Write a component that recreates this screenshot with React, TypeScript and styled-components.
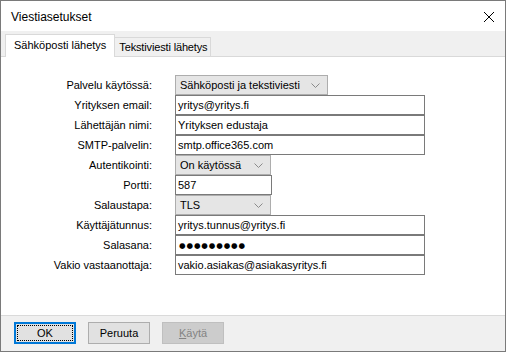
import React from 'react'
import styled, { createGlobalStyle } from 'styled-components'

const GlobalStyle = createGlobalStyle`
  html, body {
    margin: 0;
    padding: 0;
    background: #ffffff;
  }
  body {
    font-family: 'Liberation Sans', Arial, sans-serif;
    font-size: 11px;
    color: #000;
  }
`

const Window = styled.div`
  width: 506px;
  height: 352px;
  box-sizing: border-box;
  border: 1px solid #7a7a7a;
  display: flex;
  flex-direction: column;
  background: #f0f0f0;
`

const TitleBar = styled.div`
  height: 30px;
  background: #ffffff;
  display: flex;
  align-items: center;
  justify-content: space-between;
  padding: 0 11px 0 10px;
`

const Title = styled.div`
  font-size: 12px;
  color: #000;
  padding-top: 1px;
`

const CloseIcon = styled.svg`
  width: 10px;
  height: 10px;
  margin-top: 1px;
`

const TabStrip = styled.div`
  height: 25px;
  display: flex;
  align-items: flex-end;
  padding-left: 4px;
`

const Tab = styled.div<{ $active?: boolean }>`
  box-sizing: border-box;
  height: ${(p) => (p.$active ? '23px' : '19px')};
  padding: ${(p) => (p.$active ? '0 8px 2px 8px' : '0 3px 0 4px')};
  letter-spacing: ${(p) => (p.$active ? '0' : '-0.15px')};
  display: flex;
  align-items: center;
  background: ${(p) => (p.$active ? '#ffffff' : '#f0f0f0')};
  border: 1px solid #d9d9d9;
  border-bottom: none;
  margin-bottom: ${(p) => (p.$active ? '-1px' : '0')};
  position: relative;
  z-index: ${(p) => (p.$active ? 1 : 0)};
  margin-left: ${(p) => (p.$active ? '0' : '-1px')};
`

const Panel = styled.div`
  flex: 1;
  background: #ffffff;
  border-top: 1px solid #d9d9d9;
  border-bottom: 1px solid #dadada;
  padding-top: 18px;
`

const Form = styled.div`
  display: grid;
  grid-template-columns: 151px 1fr;
  grid-auto-rows: 20px;
  column-gap: 23px;
`

const Label = styled.div`
  text-align: right;
  align-self: center;
  white-space: nowrap;
`

const Field = styled.div<{ $width: number }>`
  box-sizing: border-box;
  width: ${(p) => p.$width}px;
  height: 20px;
  border: 1px solid #7a7a7a;
  background: #fff;
  padding: 0 2px;
  display: flex;
  align-items: center;
  white-space: nowrap;
  overflow: hidden;
`

const Select = styled.div<{ $width: number }>`
  box-sizing: border-box;
  width: ${(p) => p.$width}px;
  height: 20px;
  border: 1px solid #adadad;
  background: #e5e5e5;
  padding: 0 7px 0 4px;
  display: flex;
  align-items: center;
  justify-content: space-between;
  white-space: nowrap;
`

const Chevron = styled.svg`
  width: 9px;
  height: 5px;
  flex-shrink: 0;
`

const Dots = styled.span`
  font-family: 'DejaVu Sans', sans-serif;
  font-size: 7.5px;
  letter-spacing: 0.9px;
  padding-left: 1px;
`

const Footer = styled.div`
  height: 34px;
  display: flex;
  align-items: center;
  gap: 12px;
  padding: 0 0 1px 13px;
`

const Button = styled.div<{ $variant?: 'default' | 'disabled' }>`
  box-sizing: border-box;
  width: 62px;
  height: 22px;
  display: flex;
  align-items: center;
  justify-content: center;
  position: relative;
  border: 1px solid
    ${(p) =>
      p.$variant === 'default' ? '#0078d7' : p.$variant === 'disabled' ? '#bfbfbf' : '#adadad'};
  background: ${(p) => (p.$variant === 'disabled' ? '#cccccc' : '#e1e1e1')};
  color: ${(p) => (p.$variant === 'disabled' ? '#838383' : '#000')};
  box-shadow: ${(p) => (p.$variant === 'default' ? 'inset 0 0 0 1px #0078d7' : 'none')};
`

const FocusRing = styled.span`
  position: absolute;
  inset: 2px;
  border: 1px dotted #000;
`

const AccessKey = styled.span`
  text-decoration: underline;
`

function ChevronDown() {
  return (
    <Chevron viewBox="0 0 9 5">
      <path d="M0.5 0.5 L4.5 4.5 L8.5 0.5" fill="none" stroke="#8a8a8a" strokeWidth="1" />
    </Chevron>
  )
}

type Row = {
  label: string
  kind: 'input' | 'select' | 'password'
  value: string
  width: number
}

const rows: Row[] = [
  { label: 'Palvelu käytössä:', kind: 'select', value: 'Sähköposti ja tekstiviesti', width: 153 },
  { label: 'Yrityksen email:', kind: 'input', value: 'yritys@yritys.fi', width: 250 },
  { label: 'Lähettäjän nimi:', kind: 'input', value: 'Yrityksen edustaja', width: 250 },
  { label: 'SMTP-palvelin:', kind: 'input', value: 'smtp.office365.com', width: 250 },
  { label: 'Autentikointi:', kind: 'select', value: 'On käytössä', width: 96 },
  { label: 'Portti:', kind: 'input', value: '587', width: 97 },
  { label: 'Salaustapa:', kind: 'select', value: 'TLS', width: 96 },
  { label: 'Käyttäjätunnus:', kind: 'input', value: 'yritys.tunnus@yritys.fi', width: 250 },
  { label: 'Salasana:', kind: 'password', value: '●●●●●●●●●', width: 250 },
  { label: 'Vakio vastaanottaja:', kind: 'input', value: 'vakio.asiakas@asiakasyritys.fi', width: 250 }
]

export default function App(): JSX.Element {
  return (
    <>
      <GlobalStyle />
      <Window>
        <TitleBar>
          <Title>Viestiasetukset</Title>
          <CloseIcon viewBox="0 0 10 10">
            <path d="M0 0 L10 10 M10 0 L0 10" stroke="#000" strokeWidth="1" />
          </CloseIcon>
        </TitleBar>

        {/* tabs */}
        <TabStrip>
          <Tab $active>Sähköposti lähetys</Tab>
          <Tab>Tekstiviesti lähetys</Tab>
        </TabStrip>

        {/* settings form */}
        <Panel>
          <Form>
            {rows.map((row) => (
              <React.Fragment key={row.label}>
                <Label>{row.label}</Label>
                <div>
                  {row.kind === 'select' && (
                    <Select $width={row.width}>
                      <span>{row.value}</span>
                      <ChevronDown />
                    </Select>
                  )}
                  {row.kind === 'input' && <Field $width={row.width}>{row.value}</Field>}
                  {row.kind === 'password' && (
                    <Field $width={row.width}>
                      <Dots>{row.value}</Dots>
                    </Field>
                  )}
                </div>
              </React.Fragment>
            ))}
          </Form>
        </Panel>

        {/* buttons */}
        <Footer>
          <Button $variant="default">
            OK
            <FocusRing />
          </Button>
          <Button>Peruuta</Button>
          <Button $variant="disabled">
            <span>
              <AccessKey>K</AccessKey>äytä
            </span>
          </Button>
        </Footer>
      </Window>
    </>
  )
}
